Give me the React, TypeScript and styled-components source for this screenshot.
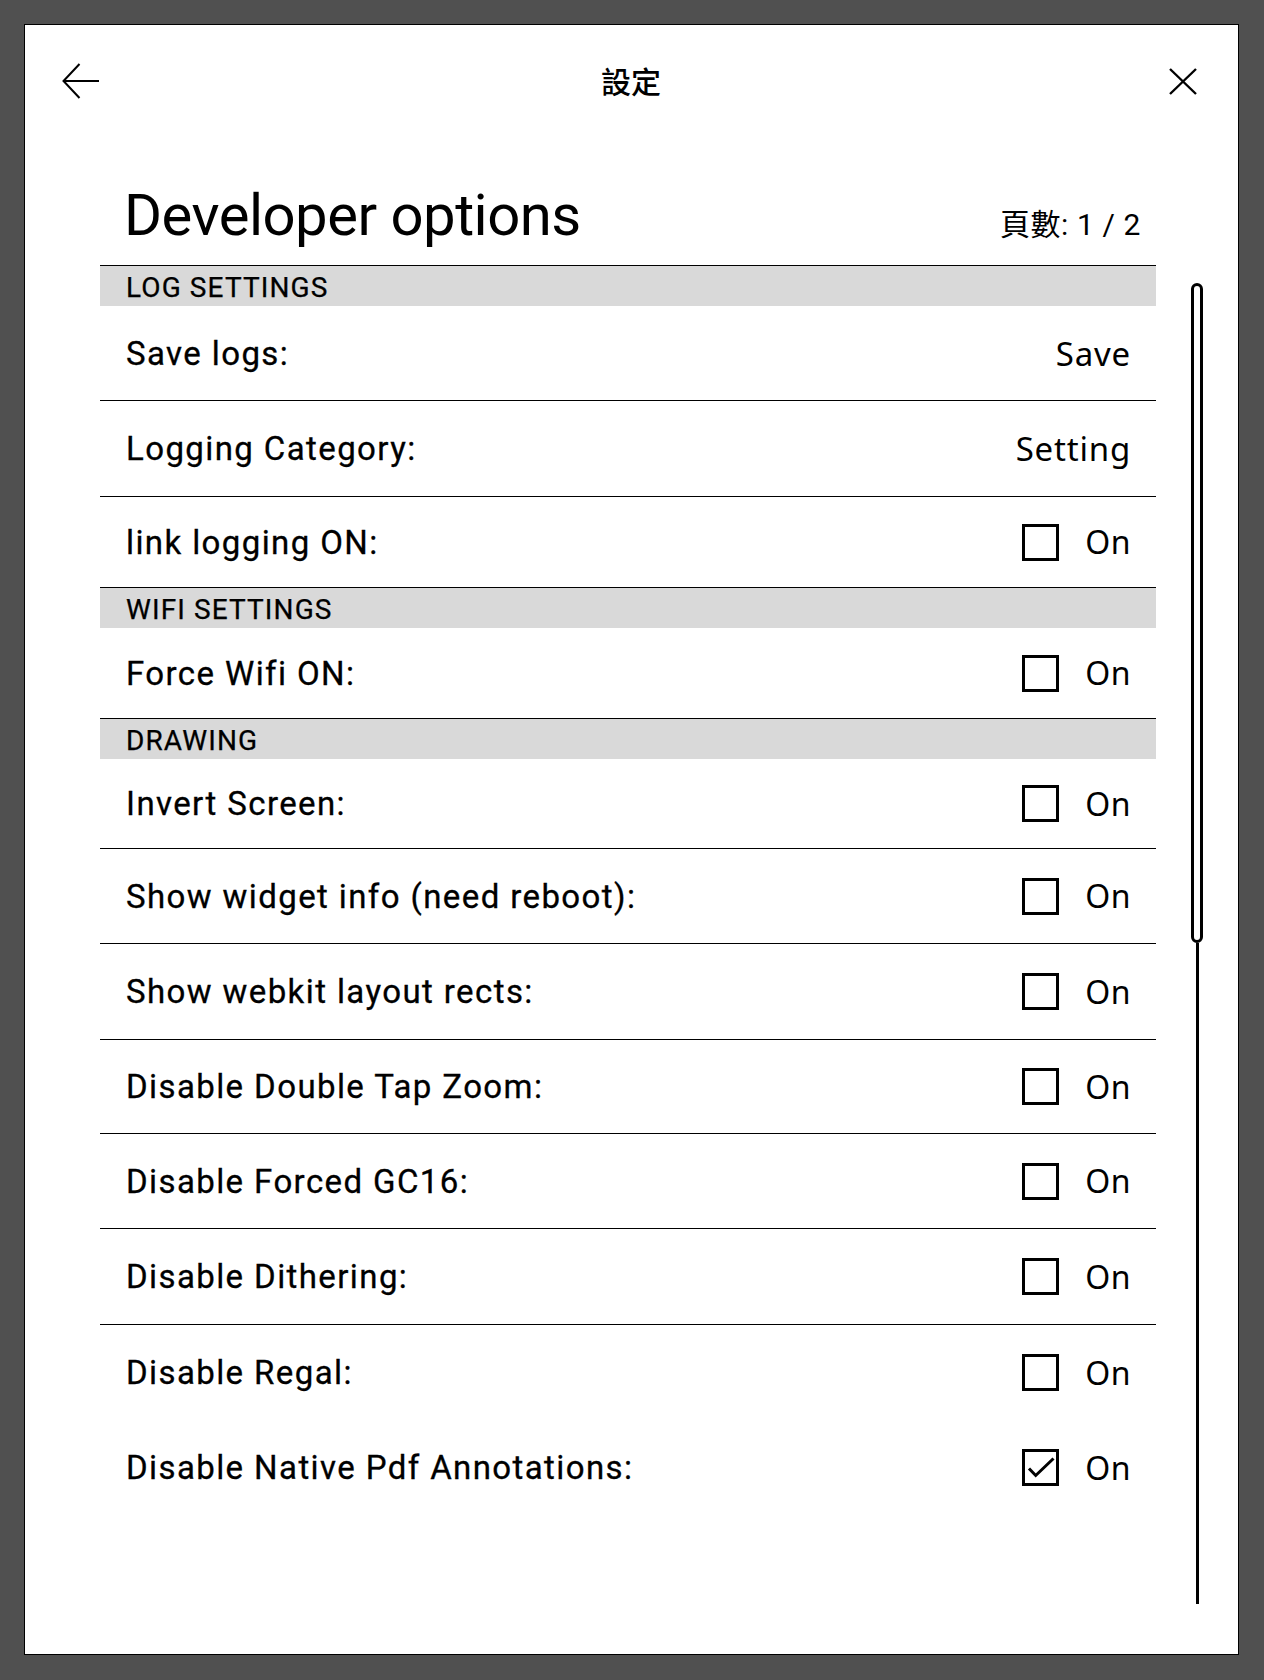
import React from "react";
import styled, { createGlobalStyle } from "styled-components";

const Global = createGlobalStyle`
  html, body { margin: 0; padding: 0; background: #505050; }
  body { font-family: Roboto, "Noto Sans CJK TC", sans-serif; color: #000; }
  * { box-sizing: border-box; }
`;

const Panel = styled.div`
  width: 1215px;
  height: 1631px;
  margin: 24px 0 0 24px;
  background: #fff;
  border: 1px solid #000;
  display: flex;
  flex-direction: column;
`;

const Header = styled.header`
  height: 112px;
  display: grid;
  grid-template-columns: 1fr auto 1fr;
  align-items: center;
  padding: 0 41px 0 37px;
`;

const IconButton = styled.button<{ $end?: boolean }>`
  background: none;
  border: 0;
  padding: 0;
  display: flex;
  justify-self: ${(p) => (p.$end ? "end" : "start")};
  cursor: pointer;
`;

const HeaderTitle = styled.h1`
  margin: 0 0 3px 3px;
  font-family: "Noto Sans CJK TC", sans-serif;
  font-weight: 500;
  font-size: 30px;
  line-height: 1;
`;

const TitleRow = styled.div`
  height: 128px;
  width: 1056px;
  margin-left: 75px;
  padding: 0 15px 21px 24px;
  display: flex;
  justify-content: space-between;
  align-items: baseline;
  align-content: flex-end;
  flex-wrap: wrap;
`;

const PageTitle = styled.h2`
  margin: 0;
  font-family: Roboto, sans-serif;
  font-weight: 400;
  font-size: 58px;
  line-height: 1;
  letter-spacing: -0.5px;
`;

const PageCount = styled.div`
  font-family: Roboto, "Noto Sans CJK TC", sans-serif;
  font-size: 30px;
  line-height: 1;
  letter-spacing: 0.6px;
`;

const Body = styled.div`
  display: flex;
  align-items: flex-start;
`;

const List = styled.div`
  width: 1056px;
  margin-left: 75px;
`;

const Band = styled.div`
  height: 41px;
  border-top: 1px solid #000;
  background: #d9d9d9;
  display: flex;
  align-items: center;
  padding: 2px 26px 0;
  font-family: Roboto, sans-serif;
  font-weight: 400;
  font-size: 28px;
  letter-spacing: 1.1px;
  -webkit-text-stroke: 0.25px #000;
`;

const Row = styled.div<{ $h: number; $line: boolean }>`
  height: ${(p) => p.$h}px;
  display: flex;
  align-items: center;
  justify-content: space-between;
  padding: 0 25px 0 26px;
  border-bottom: ${(p) => (p.$line ? "1px solid #000" : "0")};
`;

const Label = styled.span`
  font-family: Roboto, sans-serif;
  font-weight: 400;
  font-size: 33px;
  letter-spacing: 1.4px;
  -webkit-text-stroke: 0.3px #000;
`;

const Value = styled.span`
  font-family: "Noto Sans", sans-serif;
  font-size: 33px;
  letter-spacing: 0.8px;
`;

const Toggle = styled.label`
  display: flex;
  align-items: center;
  gap: 26px;
`;

const Box = styled.span`
  width: 37px;
  height: 37px;
  border: 3px solid #000;
  display: flex;
  align-items: center;
  justify-content: center;
`;

const OnText = styled.span`
  font-family: "Noto Sans", sans-serif;
  font-size: 32px;
  line-height: 1;
  letter-spacing: 0.5px;
`;

const Track = styled.div`
  margin: 18px 0 0 35px;
  width: 12px;
  height: 1321px;
  display: flex;
  flex-direction: column;
  align-items: center;
`;

const Thumb = styled.div`
  width: 12px;
  height: 660px;
  border: 3px solid #000;
  border-radius: 6px;
`;

const TrackLine = styled.div`
  width: 3px;
  flex: 1;
  background: #000;
`;

type Item =
  | { kind: "band"; text: string }
  | { kind: "value"; label: string; value: string; h: number; line: boolean }
  | { kind: "check"; label: string; checked: boolean; h: number; line: boolean };

const items: Item[] = [
  { kind: "band", text: "LOG SETTINGS" },
  { kind: "value", label: "Save logs:", value: "Save", h: 95, line: true },
  { kind: "value", label: "Logging Category:", value: "Setting", h: 96, line: true },
  { kind: "check", label: "link logging ON:", checked: false, h: 90, line: false },
  { kind: "band", text: "WIFI SETTINGS" },
  { kind: "check", label: "Force Wifi ON:", checked: false, h: 90, line: false },
  { kind: "band", text: "DRAWING" },
  { kind: "check", label: "Invert Screen:", checked: false, h: 90, line: true },
  { kind: "check", label: "Show widget info (need reboot):", checked: false, h: 95, line: true },
  { kind: "check", label: "Show webkit layout rects:", checked: false, h: 96, line: true },
  { kind: "check", label: "Disable Double Tap Zoom:", checked: false, h: 94, line: true },
  { kind: "check", label: "Disable Forced GC16:", checked: false, h: 95, line: true },
  { kind: "check", label: "Disable Dithering:", checked: false, h: 96, line: true },
  { kind: "check", label: "Disable Regal:", checked: false, h: 95, line: false },
  { kind: "check", label: "Disable Native Pdf Annotations:", checked: true, h: 95, line: false },
];

const BackIcon = () => (
  <svg width="38" height="36" viewBox="0 0 38 36" fill="none" stroke="#000" strokeWidth="2">
    <polyline points="17.5,1 1.5,18 17.5,35" />
    <line x1="1.5" y1="18" x2="37" y2="18" />
  </svg>
);

const CloseIcon = () => (
  <svg width="28" height="27" viewBox="0 0 28 27" fill="none" stroke="#000" strokeWidth="2.4">
    <line x1="1" y1="1" x2="27" y2="26" />
    <line x1="27" y1="1" x2="1" y2="26" />
  </svg>
);

const CheckMark = () => (
  <svg width="31" height="31" viewBox="0 0 31 31" fill="none" stroke="#000" strokeWidth="3">
    <polyline points="4,16.5 10.7,23.5 28.5,6.5" />
  </svg>
);

export default function App() {
  return (
    <>
      <Global />
      <Panel>
        <Header>
          <IconButton aria-label="back">
            <BackIcon />
          </IconButton>
          <HeaderTitle>設定</HeaderTitle>
          <IconButton $end aria-label="close">
            <CloseIcon />
          </IconButton>
        </Header>
        <TitleRow>
          <PageTitle>Developer options</PageTitle>
          <PageCount>頁數: 1 / 2</PageCount>
        </TitleRow>
        <Body>
          <List>
            {items.map((it, i) => {
              if (it.kind === "band") return <Band key={i}>{it.text}</Band>;
              if (it.kind === "value")
                return (
                  <Row key={i} $h={it.h} $line={it.line}>
                    <Label>{it.label}</Label>
                    <Value>{it.value}</Value>
                  </Row>
                );
              return (
                <Row key={i} $h={it.h} $line={it.line}>
                  <Label>{it.label}</Label>
                  <Toggle>
                    <Box>{it.checked && <CheckMark />}</Box>
                    <OnText>On</OnText>
                  </Toggle>
                </Row>
              );
            })}
          </List>
          <Track>
            <Thumb />
            <TrackLine />
          </Track>
        </Body>
      </Panel>
    </>
  );
}
